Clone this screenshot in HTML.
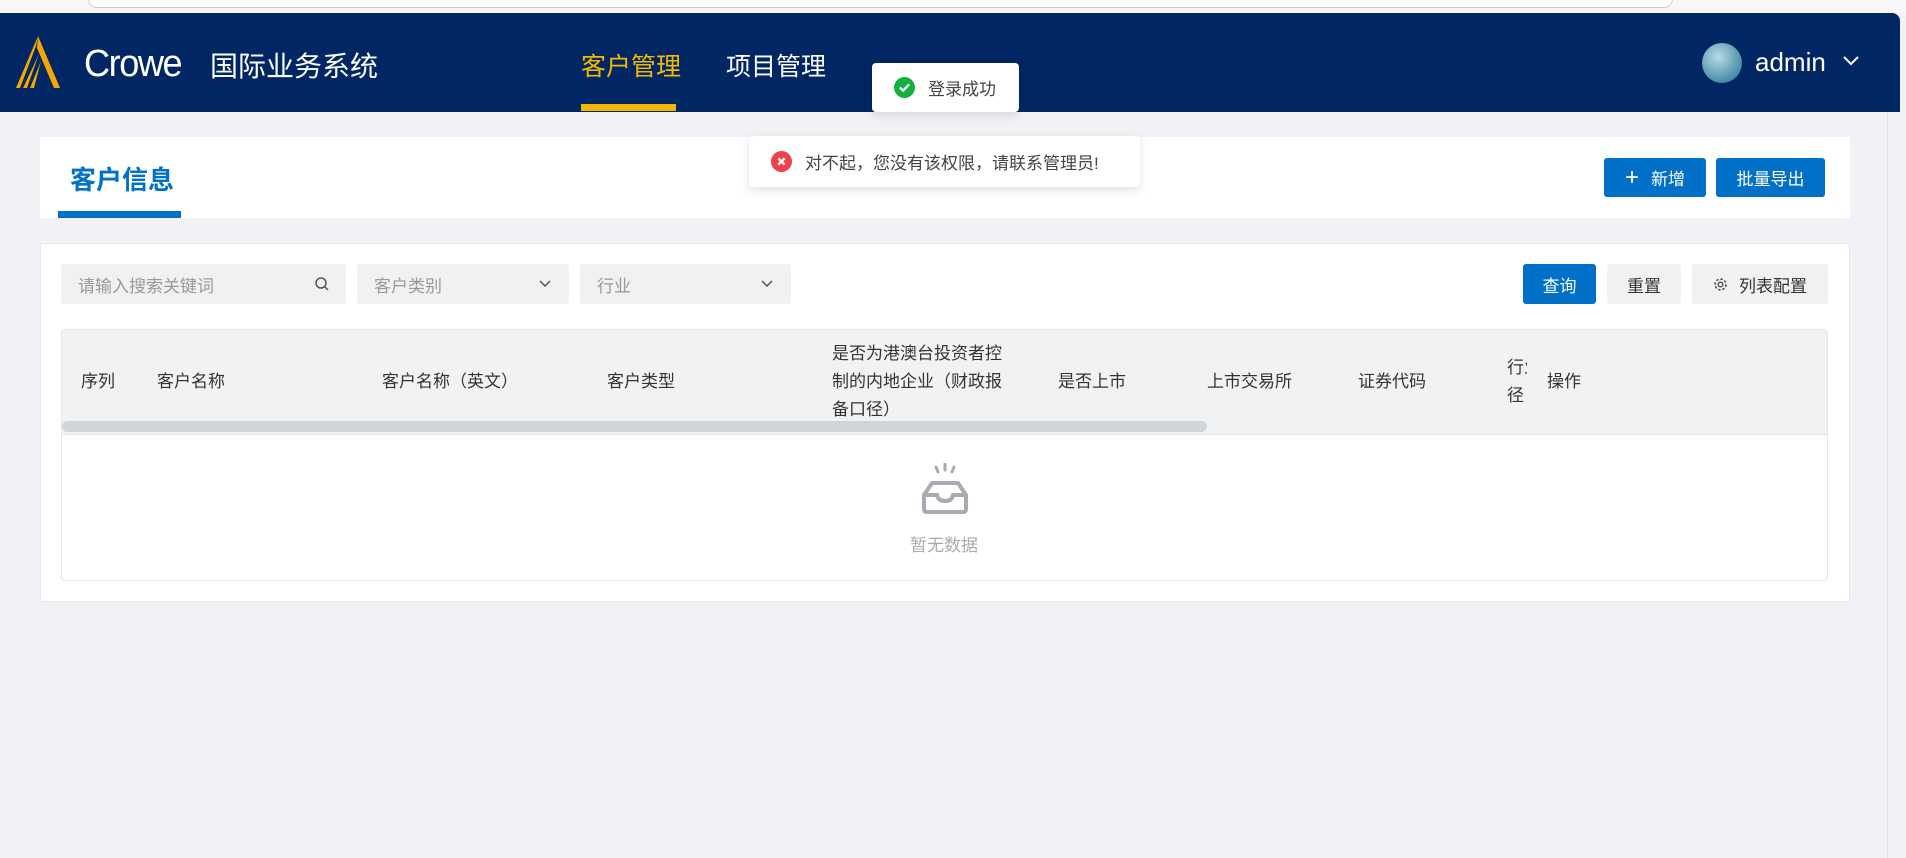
<!DOCTYPE html>
<html><head><meta charset="utf-8">
<style>
*{margin:0;padding:0;box-sizing:border-box}
body{width:1906px;height:858px;overflow:hidden;background:#f0f2f5;font-family:"Liberation Sans","Noto Sans CJK SC",sans-serif;position:relative;color:#333}
.abs{position:absolute}
.top{left:0;top:0;width:1906px;height:13px;background:#f7f7f7}
.addr{left:88px;top:-10px;width:1585px;height:18px;background:#fff;border:1px solid #ccc;border-radius:10px}
.hdr{left:0;top:13px;width:1900px;height:99px;background:#002663;border-top-right-radius:8px}
.rs{left:1887px;top:112px;width:1px;height:746px;background:#e2e2e2}
.card{background:#fff}
.btnb{background:#0070c8;color:#fff;font-size:17px;border-radius:3px;display:flex;align-items:center;justify-content:center}
.btng{background:#f0f1f3;color:#333;font-size:17px;border-radius:3px;display:flex;align-items:center;justify-content:center}
.inp{background:#f0f1f3;border-radius:3px;color:#999;font-size:17px;display:flex;align-items:center;padding-left:17px}
.th{font-size:17px;color:#333;line-height:28px}
.toast{background:#fff;border-radius:4px;box-shadow:0 3px 10px rgba(0,0,0,.12);display:flex;align-items:center;font-size:17px;color:#444}
</style></head><body>
<div class="abs top"></div><div class="abs addr"></div>
<div class="abs hdr"></div>
<svg class="abs" style="left:14px;top:36px" width="46" height="54" viewBox="0 0 46 54"><path d="M24 0 L46 52 L40 52 L23 12 Z" fill="#f5a800"/><path d="M24 0 L2 52 L6 52 L22 10 Z" fill="#f5a800"/><path d="M25 18 L9 52 L13 52 Z" fill="#f5a800"/><path d="M27 25 L16 52 L20 52 Z" fill="#f5a800"/></svg>
<div class="abs" style="left:84px;top:43px;font-size:38px;color:#fff;letter-spacing:-1.5px;font-weight:300;transform:scaleX(0.95);transform-origin:left">Crowe</div>
<div class="abs" style="left:210px;top:45px;font-size:28px;color:#fff">国际业务系统</div>
<div class="abs" style="left:581px;top:47px;font-size:25px;color:#f5b800">客户管理</div>
<div class="abs" style="left:581px;top:104px;width:95px;height:7px;background:#f5b800"></div>
<div class="abs" style="left:726px;top:47px;font-size:25px;color:#fff">项目管理</div>
<div class="abs" style="left:1702px;top:43px;width:40px;height:40px;border-radius:50%;background:radial-gradient(circle at 40% 35%,#b8dbe6,#4a8fa8 70%,#2e6d88)"></div>
<div class="abs" style="left:1755px;top:47px;font-size:26px;color:#fff">admin</div>
<svg class="abs" style="left:1842px;top:55px" width="18" height="12" viewBox="0 0 18 12"><path d="M2 2 L9 9 L16 2" stroke="#fff" stroke-width="2" fill="none"/></svg>
<div class="abs rs"></div>

<div class="abs card" style="left:40px;top:137px;width:1810px;height:81px"></div>
<div class="abs" style="left:70px;top:160px;font-size:26px;font-weight:bold;color:#0070c8">客户信息</div>
<div class="abs" style="left:58px;top:211px;width:123px;height:7px;background:#0070c8"></div>
<div class="abs btnb" style="left:1604px;top:158px;width:102px;height:39px"><span style="font-size:24px;font-weight:300;margin-right:12px">+</span>新增</div>
<div class="abs btnb" style="left:1716px;top:158px;width:109px;height:39px">批量导出</div>

<div class="abs card" style="left:40px;top:243px;width:1810px;height:359px;border:1px solid #e6e8eb"></div>
<div class="abs inp" style="left:61px;top:264px;width:285px;height:40px">请输入搜索关键词</div>
<svg class="abs" style="left:314px;top:276px" width="16" height="16" viewBox="0 0 16 16"><circle cx="7" cy="7" r="5" stroke="#555" stroke-width="1.5" fill="none"/><path d="M11 11 L14 14" stroke="#555" stroke-width="1.5"/></svg>
<div class="abs inp" style="left:357px;top:264px;width:212px;height:40px">客户类别</div>
<svg class="abs" style="left:539px;top:280px" width="12" height="8" viewBox="0 0 12 8"><path d="M1 1 L6 6 L11 1" stroke="#555" stroke-width="1.5" fill="none"/></svg>
<div class="abs inp" style="left:580px;top:264px;width:211px;height:40px">行业</div>
<svg class="abs" style="left:761px;top:280px" width="12" height="8" viewBox="0 0 12 8"><path d="M1 1 L6 6 L11 1" stroke="#555" stroke-width="1.5" fill="none"/></svg>
<div class="abs btnb" style="left:1523px;top:264px;width:73px;height:40px">查询</div>
<div class="abs btng" style="left:1607px;top:264px;width:74px;height:40px">重置</div>
<div class="abs btng" style="left:1692px;top:264px;width:136px;height:40px"><svg width="15" height="15" viewBox="0 0 16 16" style="margin-right:11px"><circle cx="8" cy="8" r="2.5" stroke="#444" stroke-width="1.4" fill="none"/><circle cx="8" cy="8" r="5.8" stroke="#444" stroke-width="1.6" stroke-dasharray="2.5 2" fill="none"/></svg>列表配置</div>

<div class="abs" style="left:61px;top:329px;width:1767px;height:252px;border:1px solid #e4e6ea;border-radius:4px;background:#fff"></div>
<div class="abs" style="left:62px;top:330px;width:1765px;height:105px;background:#f1f2f4;border-bottom:1px solid #e4e6ea;border-top-left-radius:4px;border-top-right-radius:4px"></div>
<div class="abs" style="left:62px;top:421px;width:1145px;height:11px;background:#d1d4da;border-radius:6px"></div>
<div class="abs th" style="left:81px;top:368px">序列</div>
<div class="abs th" style="left:157px;top:368px">客户名称</div>
<div class="abs th" style="left:382px;top:368px">客户名称（英文）</div>
<div class="abs th" style="left:607px;top:368px">客户类型</div>
<div class="abs th" style="left:832px;top:340px;width:180px">是否为港澳台投资者控制的内地企业（财政报备口径）</div>
<div class="abs th" style="left:1058px;top:368px">是否上市</div>
<div class="abs th" style="left:1207px;top:368px">上市交易所</div>
<div class="abs th" style="left:1358px;top:368px">证券代码</div>
<div class="abs th" style="left:1507px;top:354px;width:20px;overflow:hidden;white-space:nowrap">行业<br>径</div>
<div class="abs th" style="left:1547px;top:368px">操作</div>
<svg class="abs" style="left:918px;top:463px" width="54" height="52" viewBox="0 0 54 52"><path d="M18 4 l2 5 M27 1 v6 M36 4 l-2 5" stroke="#a8abb2" stroke-width="3" stroke-linecap="round"/><path d="M14 20 L40 20 L48 32 L48 46 Q48 49 45 49 L9 49 Q6 49 6 46 L6 32 Z" stroke="#a8abb2" stroke-width="4" fill="none" stroke-linejoin="round"/><path d="M6 32 L19 32 Q20 38 27 38 Q34 38 35 32 L48 32" stroke="#a8abb2" stroke-width="4" fill="none"/></svg>
<div class="abs" style="left:910px;top:531px;font-size:17px;color:#a8abb2">暂无数据</div>

<div class="abs toast" style="left:872px;top:63px;width:147px;height:49px;padding-left:22px"><svg width="21" height="21" viewBox="0 0 20 20" style="margin-right:13px"><circle cx="10" cy="10" r="10" fill="#13b040"/><path d="M5.5 10 L8.7 13 L14.5 7" stroke="#fff" stroke-width="2.2" fill="none"/></svg>登录成功</div>
<div class="abs toast" style="left:749px;top:136px;width:391px;height:51px;padding-left:22px"><svg width="21" height="21" viewBox="0 0 20 20" style="margin-right:13px"><circle cx="10" cy="10" r="10" fill="#f0404a"/><path d="M7 7 L13 13 M13 7 L7 13" stroke="#fff" stroke-width="2.2"/></svg>对不起，您没有该权限，请联系管理员!</div>
</body></html>
